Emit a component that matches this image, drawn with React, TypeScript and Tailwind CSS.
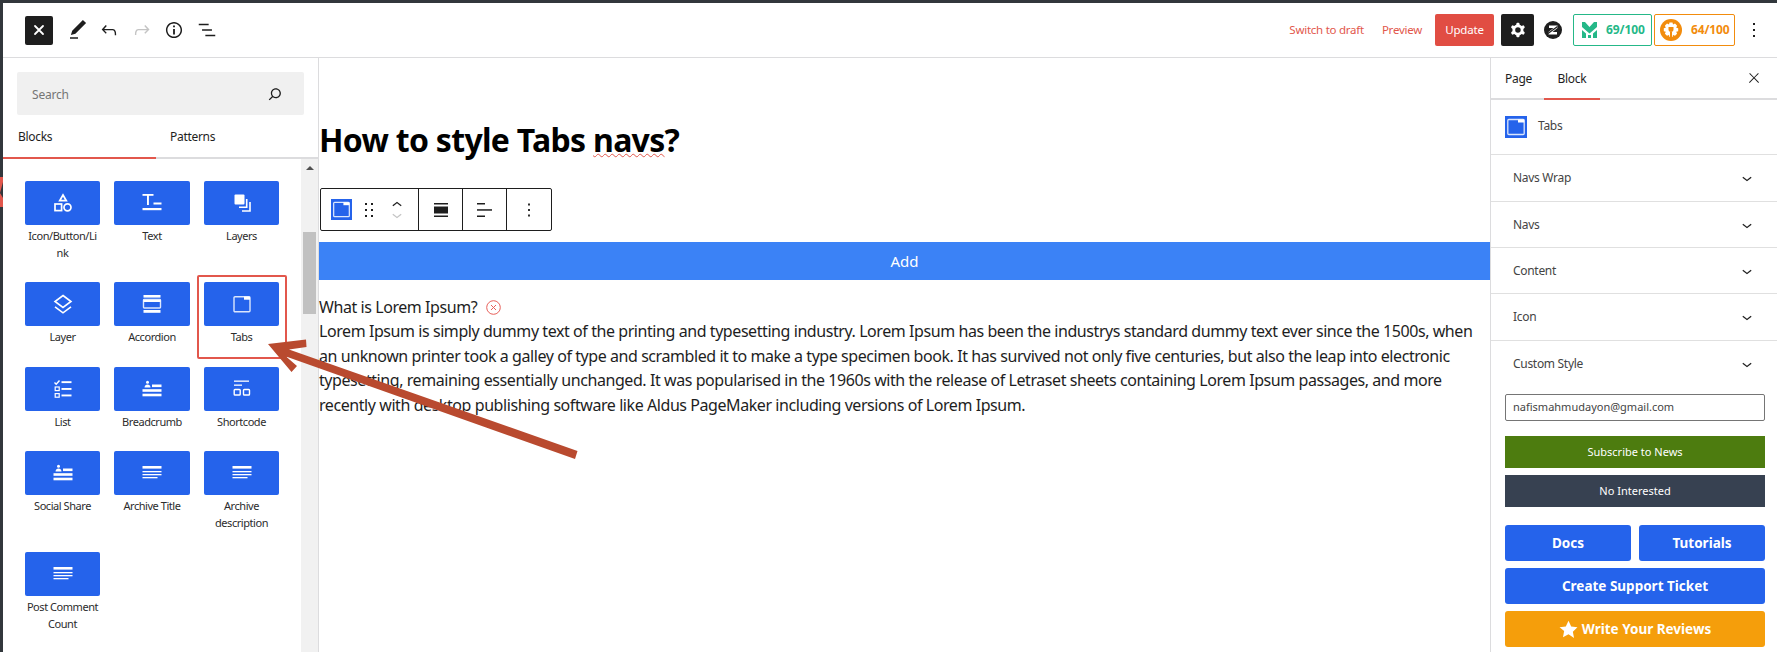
import React from "react";

const P = ({ d, s = 24, className = "", fill = "currentColor" }: { d: string; s?: number; className?: string; fill?: string }) => (
  <svg width={s} height={s} viewBox="0 0 24 24" className={className} fill={fill} fillRule="evenodd"><path d={d} /></svg>
);

const ic = {
  close: "M13 11.8l6.1-6.3-1-1-6.1 6.2-6.1-6.2-1 1 6.1 6.3-6.5 6.7 1 1 6.5-6.6 6.5 6.6 1-1z",
  pencil: "M20.1 5.1L16.9 2 6.2 12.7l-1.3 4.4 4.5-1.3L20.1 5.1zM4 20.8h8v-1.5H4v1.5z",
  undo: "M18.3 11.7c-.6-.6-1.4-.9-2.3-.9H6.7l2.9-3.3-1.1-1-4.5 5L8.5 16l1-1-2.7-2.7H16c.5 0 .9.2 1.3.5 1 1 1 3.4 1 4.5v.3h1.5v-.2c0-1.5 0-4.3-1.5-5.7z",
  redo: "M15.6 6.5l-1.1 1 2.9 3.3H8c-.9 0-1.7.3-2.3.9-1.4 1.5-1.4 4.2-1.4 5.6v.2h1.5v-.3c0-1.1 0-3.5 1-4.5.3-.3.7-.5 1.3-.5h9.2L14.5 15l1.1 1.1 4.6-4.6-4.6-5z",
  info: "M12 3.2c-4.8 0-8.8 3.9-8.8 8.8 0 4.8 3.9 8.8 8.8 8.8 4.8 0 8.8-3.9 8.8-8.8 0-4.8-4-8.8-8.8-8.8zm0 16c-4 0-7.2-3.3-7.2-7.2C4.8 8 8 4.8 12 4.8s7.2 3.3 7.2 7.2c0 4-3.2 7.2-7.2 7.2zM11 17h2v-6h-2v6zm0-8h2V7h-2v2z",
  list: "M13.8 5.2H3v1.5h10.8V5.2zm-3.6 12v1.5H21v-1.5H10.2zm7.2-6H6.6v1.5h10.8v-1.5z",
  search: "M13 5c-3.3 0-6 2.7-6 6 0 1.4.5 2.7 1.3 3.7l-3.8 3.8 1.1 1.1 3.8-3.8c1 .8 2.3 1.3 3.7 1.3 3.3 0 6-2.7 6-6S16.3 5 13 5zm0 10.5c-2.5 0-4.5-2-4.5-4.5s2-4.5 4.5-4.5 4.5 2 4.5 4.5-2 4.5-4.5 4.5z",
  cog: "M10.289 4.836A1 1 0 0 1 11.275 4h1.306a1 1 0 0 1 .987.836l.244 1.466c.787.26 1.503.679 2.108 1.218l1.393-.522a1 1 0 0 1 1.216.437l.653 1.13a1 1 0 0 1-.23 1.273l-1.148.944a6.025 6.025 0 0 1 0 2.435l1.149.946a1 1 0 0 1 .23 1.272l-.653 1.13a1 1 0 0 1-1.216.437l-1.394-.522c-.605.54-1.32.958-2.108 1.218l-.244 1.466a1 1 0 0 1-.987.836h-1.306a1 1 0 0 1-.986-.836l-.244-1.466a5.995 5.995 0 0 1-2.108-1.218l-1.394.522a1 1 0 0 1-1.217-.436l-.653-1.131a1 1 0 0 1 .23-1.272l1.149-.946a6.026 6.026 0 0 1 0-2.435l-1.148-.944a1 1 0 0 1-.23-1.272l.653-1.131a1 1 0 0 1 1.217-.437l1.393.522a5.994 5.994 0 0 1 2.108-1.218l.244-1.466zM14.929 12a3 3 0 1 1-6 0 3 3 0 0 1 6 0z",
  more: "M13 19h-2v-2h2v2zm0-6h-2v-2h2v2zm0-6h-2V5h2v2z",
  chevron: "M17.5 11.6L12 16l-5.5-4.4.9-1.2L12 14l4.5-3.6 1 1.2z",
  up: "M6.5 12.4L12 8l5.5 4.4-.9 1.2L12 10l-4.5 3.6-1-1.2z",
  drag: "M8 7h2V5H8v2zm0 6h2v-2H8v2zm0 6h2v-2H8v2zm6-14v2h2V5h-2zm0 8h2v-2h-2v2zm0 6h2v-2h-2v2z",
};

const Tabs = ({ s = 22 }: { s?: number }) => (
  <svg width={s} height={s} viewBox="0 0 22 22" className="bg-[#2563eb]">
    <rect x="2.8" y="3.5" width="16.4" height="15" rx="1" fill="none" stroke="#dbe6fd" strokeWidth="1.3" />
    <rect x="13" y="3.5" width="6.2" height="3" fill="#fff" />
  </svg>
);

const icons: Record<string, React.ReactNode> = {
  shapes: (<g fill="none" stroke="#fff" strokeWidth="1.7"><path d="M12 4l3.3 5.7H8.7z" /><rect x="4" y="13" width="6.6" height="6.6" /><circle cx="16.5" cy="16.3" r="3.5" /></g>),
  text: (<g fill="#fff"><rect x="2.5" y="3" width="11" height="1.8" /><rect x="7" y="3" width="1.9" height="11" /><rect x="13.5" y="11.5" width="8" height="2" /><rect x="2.5" y="17" width="19" height="2.2" /></g>),
  layers: (<g><rect x="4.5" y="3.5" width="10" height="10" rx="1" fill="#fff" /><path d="M16.7 8v8.3H9M20 11v9h-8" fill="none" stroke="#fff" strokeWidth="1.6" /></g>),
  layer: (<g fill="none" stroke="#fff" strokeWidth="1.6"><path d="M12 3.5l8 6-8 6-8-6z" /><path d="M4 14.8l8 6 8-6" /></g>),
  accordion: (<g><rect x="3.5" y="3" width="17" height="2.6" fill="#fff" /><rect x="3.5" y="7.5" width="17" height="8.5" rx=".7" fill="none" stroke="#dbe6fd" strokeWidth="1.4" /><rect x="3.5" y="8" width="17" height="2" fill="#fff" /><rect x="3.5" y="18" width="17" height="2.8" fill="#fff" /></g>),
  tabs: (<g><rect x="4" y="4.7" width="16" height="15" rx="1" fill="none" stroke="#dbe6fd" strokeWidth="1.4" /><rect x="14" y="4.7" width="6" height="3" fill="#fff" /></g>),
  list: (<g fill="#fff"><path d="M3.5 5.5l1.7 1.7 3.3-3.7" fill="none" stroke="#fff" strokeWidth="1.4" /><rect x="10.5" y="4.2" width="10" height="1.9" /><rect x="10.5" y="11" width="10" height="1.9" /><rect x="10.5" y="17.5" width="10" height="1.9" /><rect x="4.2" y="10" width="4" height="3.6" fill="none" stroke="#fff" strokeWidth="1.2" /><rect x="4.2" y="16.6" width="4" height="3.6" fill="none" stroke="#fff" strokeWidth="1.2" /></g>),
  crumb: (<g fill="#fff"><circle cx="7.5" cy="5.3" r="1.5" /><path d="M4.5 10.5c0-2 1.5-3 3-3s3 1 3 3z" /><rect x="12" y="7.5" width="9.5" height="2.6" /><rect x="2.5" y="12.2" width="19" height="2.6" /><rect x="2.5" y="16.7" width="19" height="2.6" /></g>),
  short: (<g><rect x="4" y="3.5" width="15" height="1.3" fill="#fff" /><rect x="4" y="7.5" width="8" height="1.3" fill="#fff" /><g fill="none" stroke="#fff" strokeWidth="1.4"><rect x="4.2" y="12.5" width="6" height="5.5" rx=".8" /><rect x="13.5" y="12.5" width="6" height="5.5" rx=".8" /></g></g>),
  lines: (<g fill="#fff"><rect x="2.5" y="5" width="19" height="2.6" /><rect x="2.5" y="10" width="19" height="1.3" /><rect x="2.5" y="13" width="19" height="1.3" /><rect x="2.5" y="16" width="15" height="1.3" /></g>),
};

const blocks = [
  ["Icon/Button/Li\nnk", "shapes"],
  ["Text", "text"],
  ["Layers", "layers"],
  ["Layer", "layer"],
  ["Accordion", "accordion"],
  ["Tabs", "tabs"],
  ["List", "list"],
  ["Breadcrumb", "crumb"],
  ["Shortcode", "short"],
  ["Social Share", "crumb"],
  ["Archive Title", "lines"],
  ["Archive\ndescription", "lines"],
  ["Post Comment\nCount", "lines"],
];

const panels = [
  ["Navs Wrap", "h-[47px] border-b border-[#e0e0e0]"],
  ["Navs", "h-[46px] border-b border-[#e0e0e0]"],
  ["Content", "h-[46px] border-b border-[#e0e0e0]"],
  ["Icon", "h-[47px] border-b border-[#e0e0e0]"],
  ["Custom Style", "h-[46px]"],
];

const lines = [
  "Lorem Ipsum is simply dummy text of the printing and typesetting industry. Lorem Ipsum has been the industrys standard dummy text ever since the 1500s, when",
  "an unknown printer took a galley of type and scrambled it to make a type specimen book. It has survived not only five centuries, but also the leap into electronic",
  "typesetting, remaining essentially unchanged. It was popularised in the 1960s with the release of Letraset sheets containing Lorem Ipsum passages, and more",
  "recently with desktop publishing software like Aldus PageMaker including versions of Lorem Ipsum.",
];

export default function App() {
  return (
    <div className="relative w-[1777px] h-[652px] overflow-hidden bg-[#32373c] pt-[3px] pl-[3px] text-[#1e1e1e] font-['Noto_Sans','Open_Sans',sans-serif]">
      <div className="h-[649px] w-[1774px] bg-white flex flex-col">
        <header className="h-[55px] shrink-0 border-b border-[#dcdcde] flex items-center pl-[22px] pr-[11px]">
          <div className="w-[28px] h-[29px] rounded-[2px] bg-[#1e1e1e] text-white flex items-center justify-center">
            <svg width="16" height="16" viewBox="0 0 16 16" stroke="#fff" strokeWidth="1.8" strokeLinecap="round"><path d="M4 4l8 8M12 4l-8 8" /></svg>
          </div>
          <P d={ic.pencil} s={24} className="ml-[13px]" />
          <P d={ic.undo} s={22} className="ml-[8px]" />
          <P d={ic.redo} s={22} className="ml-[11px] text-[#c4c4c4]" />
          <P d={ic.info} s={22} className="ml-[10px]" />
          <P d={ic.list} s={22} className="ml-[11px]" />
          <div className="flex-1" />
          <span className="text-[11.5px] tracking-[-0.25px] text-[#e2574c]">Switch to draft</span>
          <span className="text-[11.5px] tracking-[-0.25px] text-[#e2574c] ml-[18px]">Preview</span>
          <div className="ml-[13px] w-[59px] h-[32px] rounded-[2px] bg-[#e14d43] text-white text-[11.5px] tracking-[-0.2px] flex items-center justify-center">Update</div>
          <div className="ml-[7px] w-[33px] h-[32px] rounded-[2px] bg-[#1e1e1e] text-white flex items-center justify-center">
            <P d={ic.cog} s={22} />
          </div>
          <svg width="18" height="18" viewBox="0 0 18 18" className="ml-[10px]">
            <circle cx="9" cy="9" r="9" fill="#1e1e1e" />
            <path d="M5 4.5h8.5V7L8.5 11H13v2.5H4.5V11l5-4H5z" fill="#fff" />
            <path d="M4 12.5L13.5 5.5" stroke="#1e1e1e" strokeWidth="1.2" />
          </svg>
          <div className="ml-[11px] w-[79px] h-[32px] rounded-[2px] border border-[#25b888] flex items-center pl-[8px] text-[#25b888] text-[12px] tracking-[-0.1px] font-bold">
            <svg width="15" height="16" viewBox="0 0 15 16" fill="#25b888"><path d="M0 0l3 0 4.5 5L12 0h3v5l-7.5 6.5L0 5z" /><path d="M0 8l4 3.5V16H0zM15 8l-4 3.5V16h4z" /><path d="M6 13h3v3H6z" /></svg>
            <span className="ml-[9px]">69/100</span>
          </div>
          <div className="ml-[2px] w-[81px] h-[32px] rounded-[2px] border border-[#f28c0d] flex items-center pl-[5px] text-[#f28c0d] text-[12px] tracking-[-0.15px] font-bold">
            <svg width="22" height="22" viewBox="0 0 22 22">
              <circle cx="11" cy="11" r="11" fill="#f28c0d" />
              <path d="M9.5 3.5h3l.5 2 2-.9 2.1 2.1-.9 2 2 .5v3l-2 .5.9 2-2.1 2.1-2-.9-.5 2h-3l-.5-2-2 .9-2.1-2.1.9-2-2-.5v-3l2-.5-.9-2 2.1-2.1 2 .9z" fill="#fff" />
              <path d="M8.5 8v2.5c0 1.5 1 2.5 2.5 2.5s2.5-1 2.5-2.5V8zM10 19v-6h2v6z" fill="#f28c0d" />
            </svg>
            <span className="ml-[9px]">64/100</span>
          </div>
          <P d={ic.more} s={24} className="ml-[7px]" />
        </header>

        <div className="flex-1 flex min-h-0">
          <aside className="w-[316px] shrink-0 border-r border-[#dcdcde] flex flex-col">
            <div className="px-[14px] pt-[14px]">
              <div className="h-[43px] rounded-[2px] bg-[#f0f0f0] flex items-center justify-between pl-[15px] pr-[19px] text-[12px] tracking-[-0.2px] text-[#757575]">
                <span className="pt-[2px]">Search</span>
                <P d={ic.search} s={20} className="text-[#1e1e1e]" />
              </div>
            </div>
            <div className="h-[44px] shrink-0 border-b-2 border-[#dcdcde] flex relative text-[12px] tracking-[-0.3px]">
              <div className="w-[153px] h-[44px] -mb-[2px] border-b-2 border-[#e2574c] pl-[15px] pt-[1px] flex items-center">Blocks</div>
              <div className="pl-[14px] pt-[2px] flex items-center h-[42px]">Patterns</div>
            </div>
            <div className="flex-1 flex min-h-0">
              <div className="flex-1 pl-[22px] pt-[22px] overflow-hidden">
                <div className="grid grid-cols-[75px_76px_75px] gap-x-[14px] gap-y-[21px]">
                  {blocks.map(([label, key]) => (
                    <div key={label} className="flex flex-col items-stretch">
                      <div className="h-[44px] rounded-[2px] bg-[#2563eb] flex items-center justify-center">
                        <svg width="24" height="24" viewBox="0 0 24 24">{icons[key]}</svg>
                      </div>
                      <div className="mt-[3px] text-[11px] tracking-[-0.45px] leading-[16.5px] text-center whitespace-pre-line text-[#2c2c2c]">{label}</div>
                    </div>
                  ))}
                </div>
              </div>
              <div className="w-[17px] shrink-0 bg-[#f1f1f1] flex flex-col items-center">
                <div className="mt-[7px] w-0 h-0 border-x-[4px] border-x-transparent border-b-[4px] border-b-[#505050]" />
                <div className="mt-[62px] w-[13px] h-[82px] bg-[#c1c1c1]" />
              </div>
            </div>
          </aside>

          <main className="flex-1 min-w-0 flex flex-col">
            <h1 className="mt-[60px] h-[44px] text-[32px] tracking-[-0.7px] leading-[44px] font-bold text-black">
              How to style Tabs <span className="underline decoration-wavy decoration-[#e2574c] decoration-1">navs</span>?
            </h1>
            <div className="mt-[26px] ml-px w-[232px] h-[43px] rounded-[2px] border border-[#1e1e1e] flex items-stretch">
              <div className="w-[98px] flex items-center border-r border-[#1e1e1e] pl-[10px]">
                <Tabs s={21} />
                <P d={ic.drag} s={24} className="ml-[5px]" />
                <div className="ml-[6px] flex flex-col">
                  <P d={ic.up} s={20} className="-mb-[5px]" />
                  <P d={ic.chevron} s={20} className="-mt-[5px] text-[#c4c4c4]" />
                </div>
              </div>
              <div className="w-[44px] flex items-center justify-center border-r border-[#1e1e1e]">
                <svg width="24" height="24" viewBox="0 0 24 24" fill="#1e1e1e"><rect x="5" y="5" width="14" height="1.5" /><rect x="5" y="8.5" width="14" height="7" /><rect x="5" y="17.5" width="14" height="1.5" /></svg>
              </div>
              <div className="w-[44px] flex items-center justify-center border-r border-[#1e1e1e]">
                <svg width="24" height="24" viewBox="0 0 24 24" fill="#1e1e1e"><rect x="4" y="5" width="8" height="1.5" /><rect x="4" y="11.2" width="15" height="1.5" /><rect x="4" y="17.5" width="8" height="1.5" /></svg>
              </div>
              <div className="flex-1 flex items-center justify-center"><P d={ic.more} s={22} /></div>
            </div>
            <div className="mt-[11px] h-[38px] shrink-0 bg-[#3b82f6] text-white text-[15px] flex items-center justify-center">Add</div>
            <div className="mt-[15px] text-[16px] leading-[24.4px] tracking-[-0.43px] text-[#1e1e1e]">
              <div className="flex items-center whitespace-nowrap">
                What is Lorem Ipsum?
                <svg width="17" height="17" viewBox="0 0 17 17" className="ml-[8px]" fill="none" stroke="#e8605a"><circle cx="8.5" cy="8.5" r="6.8" /><path d="M6 6l5 5M11 6l-5 5" /></svg>
              </div>
              {lines.map((l) => (
                <div key={l} className="whitespace-nowrap">{l}</div>
              ))}
            </div>
          </main>

          <aside className="w-[287px] shrink-0 border-l border-[#dcdcde] flex flex-col">
            <div className="h-[42px] shrink-0 border-b-2 border-[#dcdcde] flex items-stretch text-[12px] tracking-[-0.3px]">
              <span className="ml-[14px] w-[39px] pt-[1px] flex items-center">Page</span>
              <span className="h-[42px] w-[56px] pt-[1px] flex items-center justify-center border-b-2 border-[#e2574c]">Block</span>
              <div className="flex-1" />
              <P d={ic.close} s={16} className="mr-[15px] self-center" />
            </div>
            <div className="h-[55px] shrink-0 border-b border-[#e0e0e0] flex items-start pt-[16px] pl-[14px]">
              <Tabs s={22} />
              <span className="ml-[11px] text-[12px] tracking-[-0.3px] leading-[20px] text-[#444]">Tabs</span>
            </div>
            {panels.map(([t, h]) => (
              <div key={t} className={`${h} shrink-0 flex items-center justify-between pl-[22px] pr-[20px] text-[12px] tracking-[-0.3px] text-[#444]`}>
                <span>{t}</span>
                <P d={ic.chevron} s={20} className="text-[#1e1e1e]" />
              </div>
            ))}
            <div className="pl-[14px] pr-[12px] flex flex-col">
              <div className="mt-[7px] h-[27px] rounded-[2px] border border-[#757575] pl-[7px] text-[11px] flex items-center text-[#444]">nafismahmudayon@gmail.com</div>
              <div className="mt-[15px] h-[32px] bg-[#4d7c0f] text-white text-[11px] flex items-center justify-center">Subscribe to News</div>
              <div className="mt-[7px] h-[32px] bg-[#374151] text-white text-[11px] flex items-center justify-center">No Interested</div>
              <div className="mt-[18px] grid grid-cols-2 gap-[8px]">
                <div className="h-[36px] rounded-[3px] bg-[#2563eb] text-white text-[13.5px] font-bold flex items-center justify-center">Docs</div>
                <div className="h-[36px] rounded-[3px] bg-[#2563eb] text-white text-[13.5px] font-bold flex items-center justify-center">Tutorials</div>
              </div>
              <div className="mt-[7px] h-[36px] rounded-[3px] bg-[#2563eb] text-white text-[13.5px] font-bold flex items-center justify-center">Create Support Ticket</div>
              <div className="mt-[7px] h-[36px] rounded-[3px] bg-[#f59e0b] text-white text-[13.5px] font-bold flex items-center justify-center">
                <svg width="19" height="19" viewBox="0 0 24 24" fill="#fff" className="mr-[4px]"><path d="M12 1l3.4 7.3 7.9 1-5.8 5.5 1.5 7.9L12 18l-7 3.7 1.5-7.9L.7 9.3l7.9-1z" /></svg>
                Write Your Reviews
              </div>
            </div>
          </aside>
        </div>
      </div>

      <svg className="absolute inset-0 pointer-events-none" width="1777" height="652" viewBox="0 0 1777 652">
        <rect x="198" y="276" width="88" height="82" rx="1" fill="none" stroke="#e2574c" strokeWidth="2" />
        <path d="M0 177H3V182L0 193L3 198V207H0Z" fill="#e2574c" />
        <path d="M268 344L306 339.5L306.5 347L289 349.5L577.5 451L575 459L286 356.5L297 366L291.5 372Z" fill="#b94a2f" />
      </svg>
    </div>
  );
}
